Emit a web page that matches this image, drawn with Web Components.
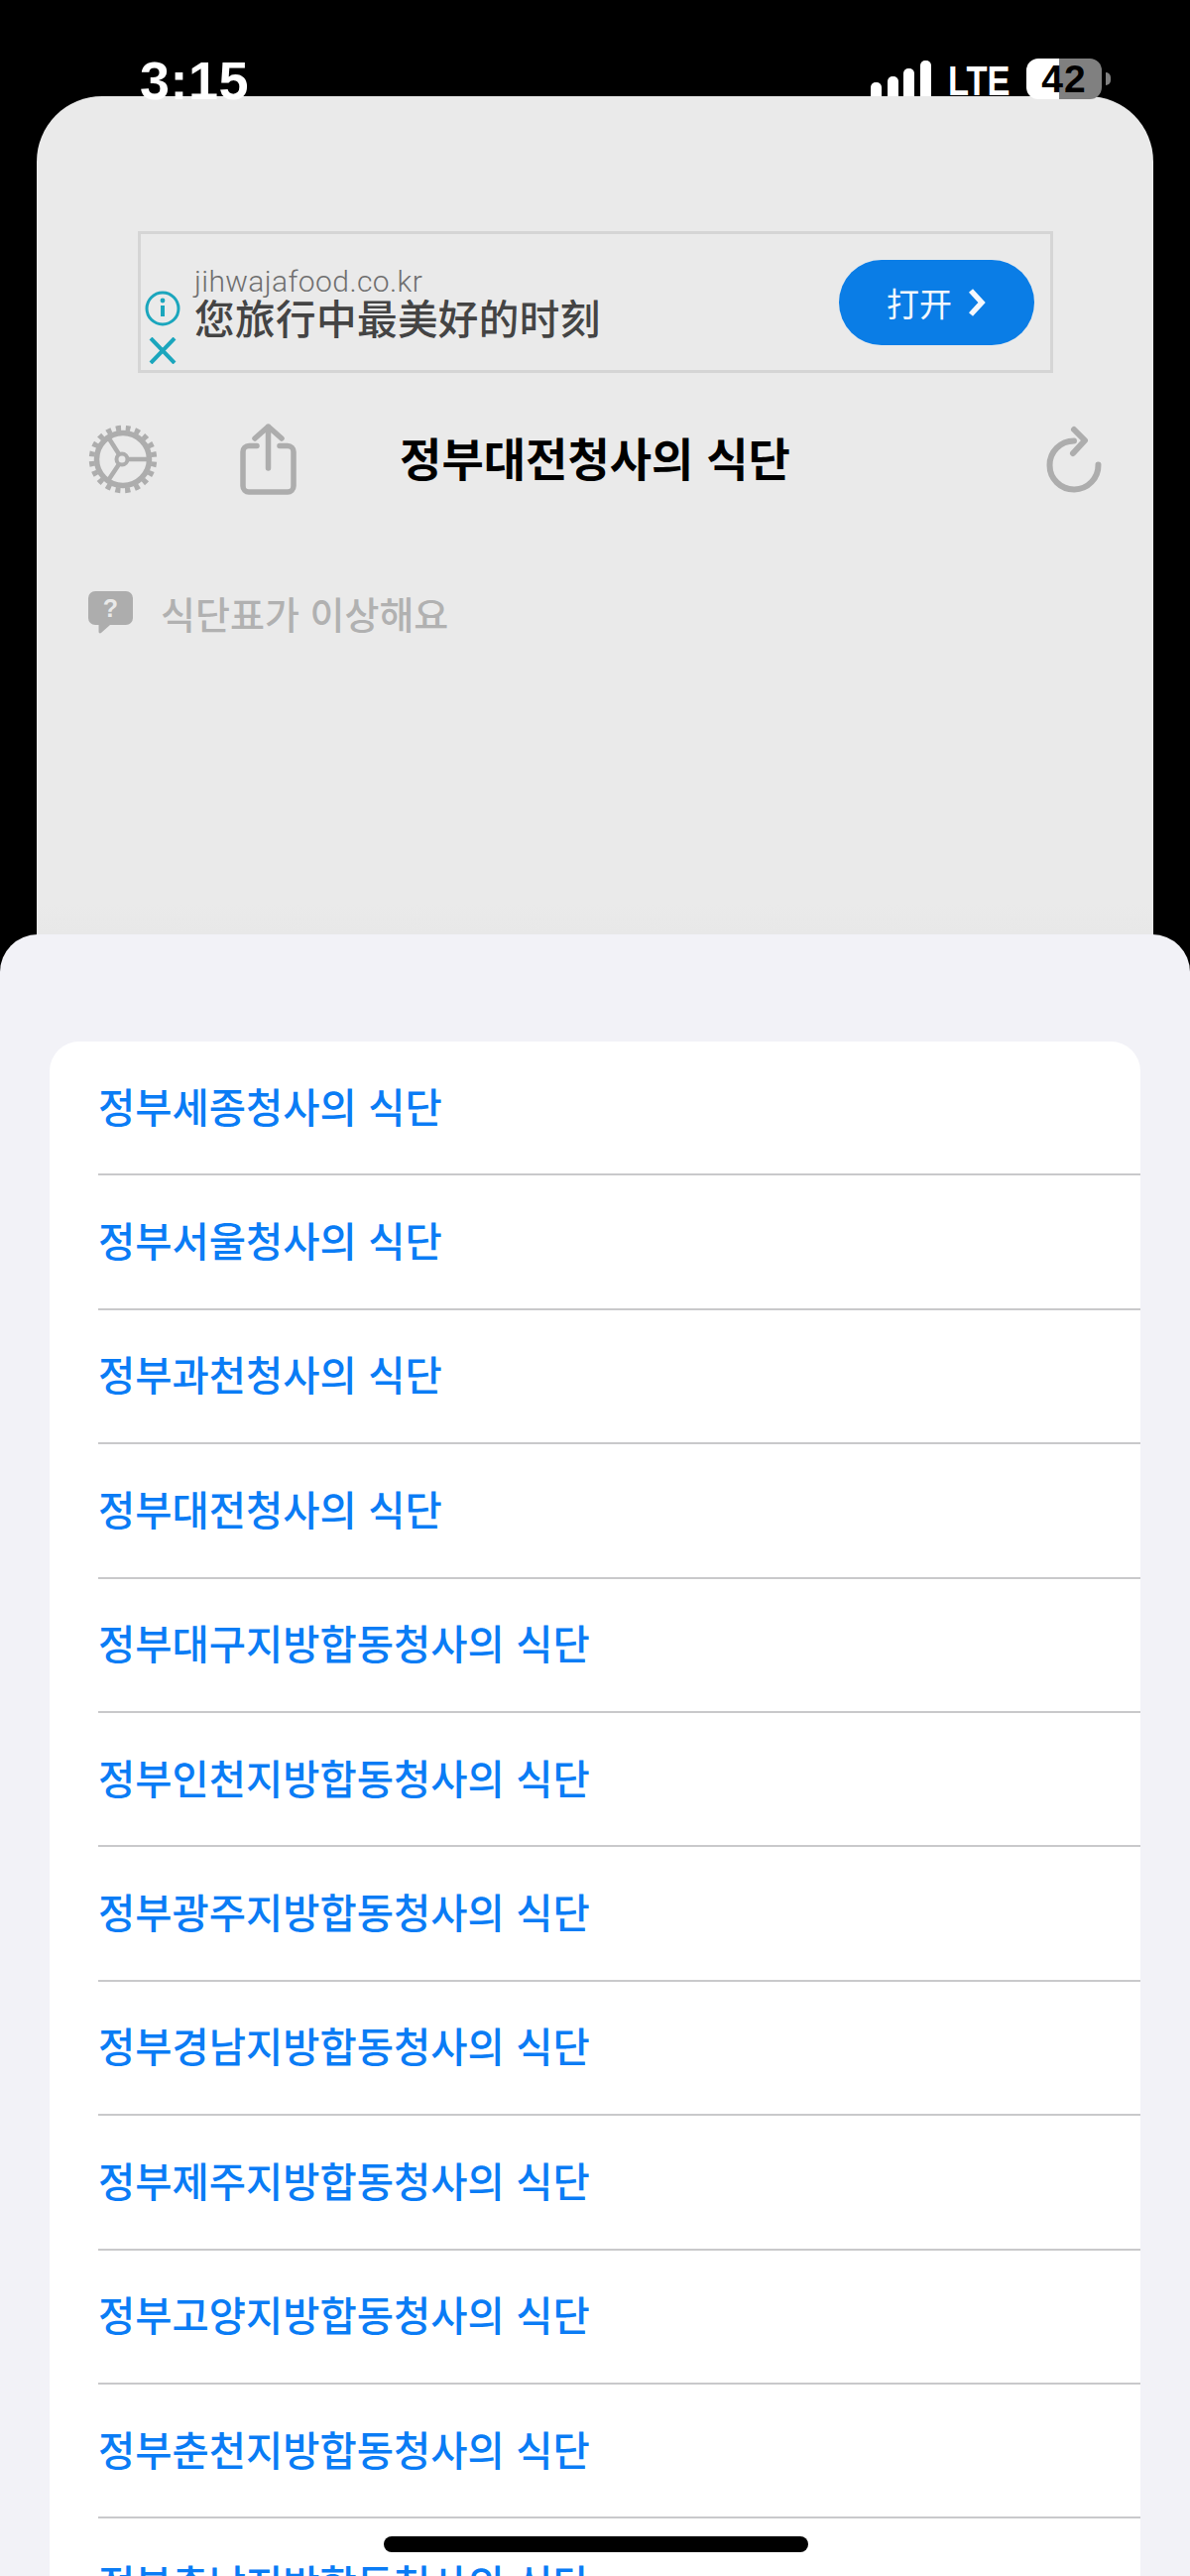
<!DOCTYPE html>
<html lang="ko">
<head>
<meta charset="utf-8">
<title>정부대전청사의 식단</title>
<style>
  html, body { margin: 0; height: 2597px; overflow: hidden; background: #000; }
  body { font-family: "Noto Sans CJK KR", "Noto Sans", sans-serif; }
</style>
</head>
<body>
<app-status></app-status>
<menu-card>
  <ad-banner></ad-banner>
  <menu-toolbar>정부대전청사의 식단</menu-toolbar>
  <report-link>식단표가 이상해요</report-link>
</menu-card>
<office-sheet>
  <office-row>정부세종청사의 식단</office-row>
  <office-row>정부서울청사의 식단</office-row>
  <office-row>정부과천청사의 식단</office-row>
  <office-row>정부대전청사의 식단</office-row>
  <office-row>정부대구지방합동청사의 식단</office-row>
  <office-row>정부인천지방합동청사의 식단</office-row>
  <office-row>정부광주지방합동청사의 식단</office-row>
  <office-row>정부경남지방합동청사의 식단</office-row>
  <office-row>정부제주지방합동청사의 식단</office-row>
  <office-row>정부고양지방합동청사의 식단</office-row>
  <office-row>정부춘천지방합동청사의 식단</office-row>
  <office-row>정부충남지방합동청사의 식단</office-row>
</office-sheet>
<home-indicator></home-indicator>

<script>
class BaseElement extends HTMLElement {
  constructor() {
    super();
    this.attachShadow({ mode: "open" });
  }
  connectedCallback() {
    this.shadowRoot.innerHTML = `<style>${this.constructor.styles}</style>${this.constructor.markup}`;
  }
}

class AppStatus extends BaseElement {
  static get styles() {
    return /* css */`
      :host {
        display: flex;
        position: relative;
        z-index: 2;
        height: 97px;
        box-sizing: border-box;
        padding: 59px 80px 0 141px;
        justify-content: space-between;
        font-family: "Liberation Sans", sans-serif;
        font-weight: 700;
        color: #fff;
      }
      .time { font-size: 54px; line-height: 44px; letter-spacing: .5px; }
      .right { display: flex; align-items: flex-start; }
      .bars { display: flex; align-items: flex-end; gap: 5.5px; box-sizing: border-box; height: 38px; width: 78px; padding-top: 2px; }
      .bars i { display: block; width: 11px; background: #fff; border-radius: 5px 5px 0 0; }
      .lte { width: 79px; font-size: 42px; line-height: 38px; margin-top: 4px; transform: scaleX(.82); transform-origin: 0 0; }
      .batt {
        width: 76px; height: 41px; border-radius: 12px;
        background: linear-gradient(90deg, #fff 43.5%, #808080 43.5%);
        color: #000; font-size: 39px; line-height: 42px; text-align: center; letter-spacing: 1px;
      }
      .tip { width: 5px; height: 13px; margin: 14px 0 0 4px; background: #808080; border-radius: 0 5px 5px 0; }
    `;
  }
  static get markup() {
    return /* html */`
      <div class="time">3:15</div>
      <div class="right">
        <div class="bars"><i style="height:14px"></i><i style="height:20px"></i><i style="height:28px"></i><i style="height:36px"></i></div>
        <div class="lte">LTE</div>
        <div class="batt">42</div>
        <div class="tip"></div>
      </div>
    `;
  }
}

class MenuCard extends BaseElement {
  static get styles() {
    return /* css */`
      :host {
        display: block;
        box-sizing: border-box;
        width: 1126px;
        height: 885px;
        margin: 0 0 -40px 37px;
        padding-top: 136px;
        border-radius: 66px 66px 0 0;
        background: linear-gradient(#eaeaea 92%, #e5e5e5);
      }
    `;
  }
  static get markup() {
    return /* html */`<slot></slot>`;
  }
}

class AdBanner extends BaseElement {
  static get styles() {
    return /* css */`
      :host {
        display: flex;
        box-sizing: border-box;
        width: 923px;
        height: 143px;
        margin-left: 102px;
        border: 3px solid #d5d5d5;
        align-items: center;
      }
      .marks { display: flex; flex-direction: column; align-self: flex-end; width: 35px; margin: 0 15px 6px 4px; gap: 11px; align-items: center; }
      .marks svg { display: block; }
      .copy { flex: 1; min-width: 0; padding-bottom: 1px; }
      .domain { font-family: Roboto, sans-serif; font-weight: 300; font-size: 30px; line-height: 31px; color: #6f6f6f; letter-spacing: .4px; }
      .head { font-family: "Noto Sans CJK SC", sans-serif; font-weight: 500; font-size: 40.6px; line-height: 42px; color: #444; letter-spacing: .4px; }
      .open {
        display: flex; align-items: center; justify-content: center; gap: 15px;
        width: 197px; height: 86px; margin-right: 16px; border-radius: 43px;
        background: #0a7de6; color: #f4f8fd;
        font-family: "Noto Sans CJK SC", sans-serif; font-size: 33px;
      }
    `;
  }
  static get markup() {
    return /* html */`
      <div class="marks">
        <svg width="36" height="36" viewBox="0 0 36 36" fill="none" stroke="#1ba6bd" stroke-width="3"><circle cx="18" cy="18" r="16"/><path d="M18 15v11" stroke-width="4"/><circle cx="18" cy="10" r="2.4" fill="#1ba6bd" stroke="none"/></svg>
        <svg width="28" height="27" viewBox="0 0 28 27" fill="none" stroke="#1ba6bd" stroke-width="4"><path d="M2 1l24 25M26 1L2 26"/></svg>
      </div>
      <div class="copy">
        <div class="domain">jihwajafood.co.kr</div>
        <div class="head" lang="zh-Hans">您旅行中最美好的时刻</div>
      </div>
      <div class="open"><span lang="zh-Hans">打开</span><svg width="20" height="28" viewBox="0 0 20 28" fill="none" stroke="#f4f8fd" stroke-width="5.5"><path d="M4 2l11 12L4 26"/></svg></div>
    `;
  }
}

class MenuToolbar extends BaseElement {
  static get styles() {
    return /* css */`
      :host {
        display: grid;
        grid-template-columns: 1fr auto 1fr;
        align-items: center;
        height: 106px;
        margin-top: 34px;
      }
      .left { display: flex; align-items: center; padding-left: 52px; gap: 83px; }
      .right { display: flex; justify-content: flex-end; padding-right: 49px; }
      svg { display: block; }
      .title { font-size: 46px; font-weight: 700; color: #000; line-height: 60px; padding-bottom: 6px; }
    `;
  }
  static get markup() {
    return /* html */`
      <div class="left">
        <svg width="70" height="70" viewBox="0 0 70 70" fill="none" stroke="#adadad">
          <circle cx="35" cy="35" r="31.5" stroke-width="5.5" stroke-dasharray="5.2 4.7" stroke-dashoffset="2.6" transform="rotate(-81 35 35)"/>
          <circle cx="35" cy="35" r="26.5" stroke-width="5.5"/>
          <circle cx="34" cy="35" r="5.5" stroke-width="4"/>
          <path d="M39 35h22M31 30L19 11M31 40L19 58" stroke-width="4.5"/>
        </svg>
        <svg width="57" height="72" viewBox="0 0 57 72" fill="none" stroke="#adadad" stroke-width="5.5" stroke-linecap="round" stroke-linejoin="round">
          <path d="M28.5 3v42M15 15L28.5 3 42 15"/>
          <path d="M17 22.500H9a6 6 0 0 0-6 6V63a6 6 0 0 0 6 6h39a6 6 0 0 0 6-6V28.500a6 6 0 0 0-6-6h-8"/>
        </svg>
      </div>
      <div class="title"><slot></slot></div>
      <div class="right">
        <svg width="62" height="72" viewBox="0 0 62 72" fill="none" stroke="#adadad" stroke-width="6" stroke-linecap="round" stroke-linejoin="round">
          <path d="M55.5 41.500A24.500 24.500 0 1 1 31 17.500"/>
          <path d="M31 6l11 11-12 13"/>
        </svg>
      </div>
    `;
  }
}

class ReportLink extends BaseElement {
  static get styles() {
    return /* css */`
      :host {
        display: flex;
        align-items: center;
        gap: 28px;
        margin-top: 76px;
        padding-left: 52px;
        height: 50px;
        color: #b1b1b1;
        font-size: 38px;
        font-weight: 500;
      }
      svg { display: block; }
    `;
  }
  static get markup() {
    return /* html */`
      <svg width="45" height="43" viewBox="0 0 45 43">
        <path fill="#adadad" d="M7 0h31a7 7 0 0 1 7 7v20a7 7 0 0 1-7 7H22l-9 8c-1 .8-2.500.3-2.500-1v-7H7a7 7 0 0 1-7-7V7a7 7 0 0 1 7-7z"/>
        <text x="22.500" y="26" font-family="Liberation Sans, sans-serif" font-size="25" font-weight="700" text-anchor="middle" fill="#e9e9e9">?</text>
      </svg>
      <span><slot></slot></span>
    `;
  }
}

class OfficeSheet extends BaseElement {
  static get styles() {
    return /* css */`
      :host {
        display: block;
        position: relative;
        z-index: 1;
        box-sizing: border-box;
        height: 1655px;
        overflow: hidden;
        padding: 108px 50px 0;
        background: #f2f2f7;
        border-radius: 38px 38px 0 0;
      }
      .group { background: #fff; border-radius: 30px 30px 0 0; overflow: hidden; }
    `;
  }
  static get markup() {
    return /* html */`<div class="group"><slot></slot></div>`;
  }
}

class OfficeRow extends BaseElement {
  static get styles() {
    return /* css */`
      :host {
        display: flex;
        align-items: center;
        box-sizing: border-box;
        height: 135.4px;
        margin-left: 49px;
        padding-bottom: 5px;
        border-bottom: 2px solid #c9c9cb;
        color: #0a7cf5;
        font-size: 40.5px;
        font-weight: 500;
      }
    `;
  }
  static get markup() {
    return /* html */`<slot></slot>`;
  }
}

class HomeIndicator extends BaseElement {
  static get styles() {
    return /* css */`
      :host {
        position: absolute;
        z-index: 3;
        left: 387px;
        top: 2557px;
        width: 428px;
        height: 16px;
        border-radius: 8px;
        background: #000;
      }
    `;
  }
  static get markup() {
    return "";
  }
}

customElements.define("app-status", AppStatus);
customElements.define("menu-card", MenuCard);
customElements.define("ad-banner", AdBanner);
customElements.define("menu-toolbar", MenuToolbar);
customElements.define("report-link", ReportLink);
customElements.define("office-sheet", OfficeSheet);
customElements.define("office-row", OfficeRow);
customElements.define("home-indicator", HomeIndicator);
</script>
</body>
</html>
